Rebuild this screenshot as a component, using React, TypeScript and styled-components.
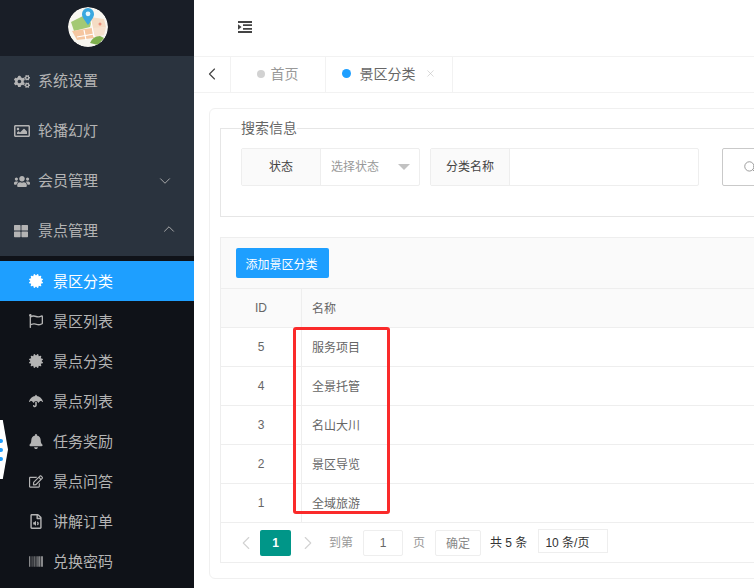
import React from 'react'
import styled, { createGlobalStyle } from 'styled-components'
import {
  FaCogs, FaRegImage, FaUsers, FaThLarge, FaCertificate, FaRegFlag,
  FaUmbrella, FaBell, FaRegEdit, FaRegFileAudio, FaBarcode,
} from 'react-icons/fa'
import { ChevronDown, ChevronUp, ChevronLeft, ChevronRight, X, Search } from 'lucide-react'

const fontStack = `"Liberation Sans", "Noto Sans CJK SC", sans-serif`

const mainMenu = [
  { text: '系统设置', icon: <FaCogs />, size: 17 },
  { text: '轮播幻灯', icon: <FaRegImage />, size: 16 },
  { text: '会员管理', icon: <FaUsers />, size: 17 },
  { text: '景点管理', icon: <FaThLarge />, size: 14 },
]

const subMenu = [
  { text: '景区分类', icon: <FaCertificate />, size: 14, active: true },
  { text: '景区列表', icon: <FaRegFlag />, size: 14 },
  { text: '景点分类', icon: <FaCertificate />, size: 14 },
  { text: '景点列表', icon: <FaUmbrella />, size: 14 },
  { text: '任务奖励', icon: <FaBell />, size: 15 },
  { text: '景点问答', icon: <FaRegEdit />, size: 15 },
  { text: '讲解订单', icon: <FaRegFileAudio />, size: 15 },
  { text: '兑换密码', icon: <FaBarcode />, size: 15 },
]

const rows = [
  { id: 5, name: '服务项目' },
  { id: 4, name: '全景托管' },
  { id: 3, name: '名山大川' },
  { id: 2, name: '景区导览' },
  { id: 1, name: '全域旅游' },
]

const Logo = () => (
  <svg width="40" height="40" viewBox="0 0 40 40">
    <defs>
      <clipPath id="logoClip"><circle cx="20" cy="20" r="20" /></clipPath>
    </defs>
    <g clipPath="url(#logoClip)">
      <rect width="40" height="40" fill="#f8f6f0" />
      <path d="M3 15 L17 8 L24 12 L22 20 L6 24 Z" fill="#a3c974" />
      <path d="M22 10 L36 12 L38 20 L24 22 Z" fill="#f5dcc4" />
      <path d="M4 24 L24 21 L26 31 L9 33 Z" fill="#f5c6a0" />
      <path d="M24 21 L38 20 L36 28 L27 30 Z" fill="#f7e2cf" />
      <path d="M22 36 Q25 29 32 29 L36 31 L30 38 Z" fill="#7fb04e" />
      <path d="M9 30 L26 27 M16 23 L18 33 M23 14 L26 30" stroke="#fff" strokeWidth="1.2" />
      <circle cx="32" cy="17" r="1.5" fill="#e98f7c" />
      <path d="M20 18 C15.5 12 14 9.5 14 7 A6 6 0 0 1 26 7 C26 9.5 24.5 12 20 18 Z" fill="#3aa8e0" />
      <circle cx="20" cy="6.8" r="2.4" fill="#e8f6fc" />
    </g>
  </svg>
)

const IndentIcon = () => (
  <svg width="14" height="12" viewBox="0 0 14 12">
    <path d="M0 0h14v2H0zM5 3.3h9v1.7H5zM5 7h9v1.7H5zM0 10h14v2H0zM0 3.2L3.6 6 0 8.8z" fill="#444" />
  </svg>
)

const App = () => (
  <>
    <GlobalStyle />
    <Page>
      <Sidebar>
        <LogoBar>
          <LogoCircle><Logo /></LogoCircle>
        </LogoBar>
        <MainMenu>
          {mainMenu.map((item, i) => (
            <MainItem key={item.text}>
              <MainIcon $size={item.size}>{item.icon}</MainIcon>
              <span>{item.text}</span>
              {i === 2 && <MenuArrow $offset={20}><ChevronDown size={18} strokeWidth={1.2} /></MenuArrow>}
              {i === 3 && <MenuArrow $offset={16} $lift={4}><ChevronUp size={18} strokeWidth={1.2} /></MenuArrow>}
            </MainItem>
          ))}
        </MainMenu>
        <SubMenu>
          {subMenu.map(item => (
            <SubItem key={item.text} $active={item.active}>
              <SubIcon $size={item.size}>{item.icon}</SubIcon>
              <span>{item.text}</span>
            </SubItem>
          ))}
        </SubMenu>
      </Sidebar>

      <Main>
        <Header>
          <IndentIcon />
        </Header>
        <TabBar>
          <BackTab><ChevronLeft size={20} strokeWidth={1.4} /></BackTab>
          <Tab $width={95}>
            <TabDot />
            <TabLabel $muted>首页</TabLabel>
          </Tab>
          <Tab $width={127}>
            <TabDot $active />
            <TabLabel>景区分类</TabLabel>
            <TabClose><X size={11} strokeWidth={1.2} /></TabClose>
          </Tab>
        </TabBar>

        <Content>
          <Card>
            <SearchBox>
              <SearchLegend>搜索信息</SearchLegend>
              <SearchRow>
                <InputGroup>
                  <GroupLabel>状态</GroupLabel>
                  <SelectBox>
                    <GroupText>选择状态</GroupText>
                    <Caret />
                  </SelectBox>
                </InputGroup>
                <InputGroup>
                  <GroupLabel>分类名称</GroupLabel>
                  <TextBox />
                </InputGroup>
                <SearchButton><Search size={14} strokeWidth={1.4} /></SearchButton>
              </SearchRow>
            </SearchBox>

            <TablePanel>
              <Toolbar>
                <AddButton>添加景区分类</AddButton>
              </Toolbar>
              <HeadRow>
                <IdCell>ID</IdCell>
                <NameCell $lift={2}>名称</NameCell>
              </HeadRow>
              {rows.map(row => (
                <BodyRow key={row.id}>
                  <IdCell $lift={1}>{row.id}</IdCell>
                  <NameCell $lift={2}>{row.name}</NameCell>
                </BodyRow>
              ))}
              <Pager>
                <PagerArrow $width={29}><ChevronLeft size={22} strokeWidth={1.2} /></PagerArrow>
                <CurrentPage>1</CurrentPage>
                <PagerArrow $width={33}><ChevronRight size={22} strokeWidth={1.2} /></PagerArrow>
                <PagerText>到第</PagerText>
                <PageInput>1</PageInput>
                <PagerText>页</PagerText>
                <ConfirmButton>确定</ConfirmButton>
                <TotalText>共 5 条</TotalText>
                <SizeSelect>10 条/页</SizeSelect>
              </Pager>
              <RedMark />
            </TablePanel>
          </Card>
        </Content>
      </Main>

      <SideWidget>
        <WidgetDot />
        <WidgetDot />
        <WidgetDot />
      </SideWidget>
    </Page>
  </>
)

const GlobalStyle = createGlobalStyle`
  html, body {
    margin: 0;
    padding: 0;
    background: #fff;
    overflow: hidden;
  }
  * {
    box-sizing: border-box;
  }
`

const Page = styled.div`
  position: relative;
  display: flex;
  width: 754px;
  height: 588px;
  overflow: hidden;
  font-family: ${fontStack};
  color: #666;
`

const Sidebar = styled.aside`
  width: 194px;
  flex-shrink: 0;
  background: #0f1218;
`

const LogoBar = styled.div`
  display: flex;
  align-items: center;
  height: 56px;
  padding: 0 0 2px 68px;
  background: #191e27;
`

const LogoCircle = styled.div`
  width: 40px;
  height: 40px;
  border-radius: 50%;
  overflow: hidden;
`

const MainMenu = styled.div`
  background: #2a333e;
`

const MainItem = styled.div`
  display: flex;
  align-items: center;
  height: 50px;
  padding-left: 14px;
  font-size: 15px;
  color: #b4b4b4;

  > span:nth-child(2) {
    padding-bottom: 4px;
  }
`

const MainIcon = styled.span<{ $size: number }>`
  display: flex;
  justify-content: flex-start;
  width: 16px;
  margin-right: 8px;
  font-size: ${p => p.$size}px;
`

const MenuArrow = styled.span<{ $offset: number; $lift?: number }>`
  display: flex;
  margin-left: auto;
  margin-right: ${p => p.$offset}px;
  padding-bottom: ${p => p.$lift ?? 0}px;
`

const SubMenu = styled.div`
  padding-top: 5px;
`

const SubItem = styled.div<{ $active?: boolean }>`
  display: flex;
  align-items: center;
  height: 40px;
  padding-left: 29px;
  font-size: 15px;
  background: ${p => (p.$active ? '#1e9fff' : 'transparent')};
  color: ${p => (p.$active ? '#fff' : '#b4b4b4')};

  > span:nth-child(2) {
    padding-bottom: 2px;
  }
`

const SubIcon = styled.span<{ $size: number }>`
  display: flex;
  justify-content: center;
  width: 14px;
  margin-right: 10px;
  font-size: ${p => p.$size}px;
`

const Main = styled.main`
  flex: 1;
  min-width: 0;
  overflow: hidden;
`

const Header = styled.header`
  display: flex;
  align-items: center;
  height: 57px;
  padding: 0 0 2px 44px;
  border-bottom: 1px solid #f2f2f2;
`

const TabBar = styled.nav`
  display: flex;
  height: 36px;
  border-bottom: 1px solid #f2f2f2;
`

const BackTab = styled.div`
  display: flex;
  align-items: center;
  width: 37px;
  padding: 0 0 2px 8px;
  color: #444;
  border-right: 1px solid #f2f2f2;
`

const Tab = styled.div<{ $width: number }>`
  display: flex;
  align-items: center;
  justify-content: center;
  width: ${p => p.$width}px;
  padding: 0 1px 2px 0;
  border-right: 1px solid #f2f2f2;
`

const TabDot = styled.i<{ $active?: boolean }>`
  width: ${p => (p.$active ? 9 : 8)}px;
  height: ${p => (p.$active ? 9 : 8)}px;
  margin-right: ${p => (p.$active ? 9 : 6)}px;
  border-radius: 50%;
  background: ${p => (p.$active ? '#1e9fff' : '#d2d2d2')};
`

const TabLabel = styled.span<{ $muted?: boolean }>`
  padding-bottom: 2px;
  font-size: 14px;
  color: ${p => (p.$muted ? '#999' : '#666')};
`

const TabClose = styled.span`
  display: flex;
  margin-left: 9px;
  color: #bbb;
`

const Content = styled.div`
  width: 900px;
  padding: 15px 0 0 15px;
`

const Card = styled.section`
  height: 471px;
  padding: 9px 10px;
  border: 1px solid #f0f0f0;
  border-radius: 6px;
`

const SearchBox = styled.fieldset`
  margin: 0;
  padding: 10px 20px 30px;
  min-width: 0;
  border: 1px solid #e6e6e6;
`

const SearchLegend = styled.legend`
  padding: 0;
  font-size: 14px;
  line-height: 20px;
  color: #666;
`

const SearchRow = styled.div`
  display: flex;
  align-items: flex-start;
  gap: 10px;
`

const InputGroup = styled.div`
  display: flex;
  height: 38px;
  border: 1px solid #eee;
  border-radius: 2px;
  font-size: 12px;
`

const GroupLabel = styled.div`
  display: flex;
  align-items: center;
  justify-content: center;
  width: 79px;
  padding-bottom: 3px;
  background: #fafafa;
  border-right: 1px solid #eee;
  color: #444;
`

const SelectBox = styled.div`
  display: flex;
  align-items: center;
  justify-content: space-between;
  width: 98px;
  padding: 0 9px 0 10px;
  color: #999;
`

const GroupText = styled.span`
  padding-bottom: 3px;
`

const Caret = styled.i`
  width: 0;
  height: 0;
  border-style: solid;
  border-width: 6px 6px 0;
  border-color: #c2c2c2 transparent transparent;
`

const TextBox = styled.div`
  width: 188px;
`

const SearchButton = styled.div`
  display: flex;
  align-items: center;
  width: 100px;
  height: 38px;
  margin-left: 13px;
  padding-left: 20px;
  border: 1px solid #c9c9c9;
  border-radius: 2px;
  color: #888;
`

const TablePanel = styled.div`
  position: relative;
  margin-top: 20px;
  border: 1px solid #eee;
  font-size: 12px;
`

const Toolbar = styled.div`
  height: 51px;
  padding: 10px 15px;
  background: #fafafa;
  border-bottom: 1px solid #eee;
`

const AddButton = styled.button`
  display: block;
  width: 93px;
  height: 30px;
  padding: 0 2px 0 0;
  border: 0;
  border-radius: 2px;
  background: #1e9fff;
  color: #fff;
  font-family: inherit;
  font-size: 12px;
`

const HeadRow = styled.div`
  display: flex;
  height: 39px;
  background: #fafafa;
  border-bottom: 1px solid #eee;
`

const BodyRow = styled.div`
  display: flex;
  height: 39px;
  border-bottom: 1px solid #eee;
`

const IdCell = styled.div<{ $lift?: number }>`
  display: flex;
  align-items: center;
  justify-content: center;
  width: 81px;
  padding-bottom: ${p => p.$lift ?? 0}px;
  border-right: 1px solid #eee;
`

const NameCell = styled.div<{ $lift?: number }>`
  display: flex;
  align-items: center;
  padding: 0 0 ${p => p.$lift ?? 0}px 10px;
`

const Pager = styled.div`
  display: flex;
  align-items: center;
  height: 39px;
  padding-left: 10px;
  color: #666;
`

const PagerArrow = styled.span<{ $width: number }>`
  display: flex;
  justify-content: center;
  width: ${p => p.$width}px;
  color: #d2d2d2;
`

const CurrentPage = styled.div`
  display: flex;
  align-items: center;
  justify-content: center;
  width: 31px;
  height: 26px;
  border-radius: 2px;
  background: #009688;
  color: #fff;
  font-weight: 700;
`

const PagerText = styled.span`
  margin-left: 5px;
  padding-bottom: 3px;
  color: #999;
`

const PageInput = styled.div`
  display: flex;
  align-items: center;
  justify-content: center;
  width: 40px;
  height: 26px;
  margin: 0 5px 0 10px;
  border: 1px solid #eee;
  border-radius: 2px;
`

const ConfirmButton = styled.div`
  display: flex;
  align-items: center;
  justify-content: center;
  width: 46px;
  height: 26px;
  margin-left: 10px;
  border: 1px solid #eee;
  border-radius: 2px;
  color: #888;
`

const TotalText = styled.span`
  margin-left: 9px;
  padding-bottom: 2px;
  color: #333;
`

const SizeSelect = styled.div`
  display: flex;
  align-items: center;
  width: 70px;
  height: 24px;
  margin: 0 0 3px 11px;
  padding-left: 6px;
  border: 1px solid #eee;
  color: #333;
`

const RedMark = styled.div`
  position: absolute;
  left: 72px;
  top: 89px;
  width: 97px;
  height: 187px;
  border: 3px solid #fa2a2a;
  border-radius: 3px;
`

const SideWidget = styled.div`
  position: absolute;
  left: 0;
  top: 420px;
  display: flex;
  flex-direction: column;
  justify-content: center;
  gap: 5px;
  width: 8px;
  height: 59px;
  background: #fff;
  clip-path: polygon(0 0, 35% 0, 100% 50%, 35% 100%, 0 100%);
`

const WidgetDot = styled.i`
  width: 3px;
  height: 4px;
  border-radius: 0 2px 2px 0;
  background: #1e9fff;
`

export default App
